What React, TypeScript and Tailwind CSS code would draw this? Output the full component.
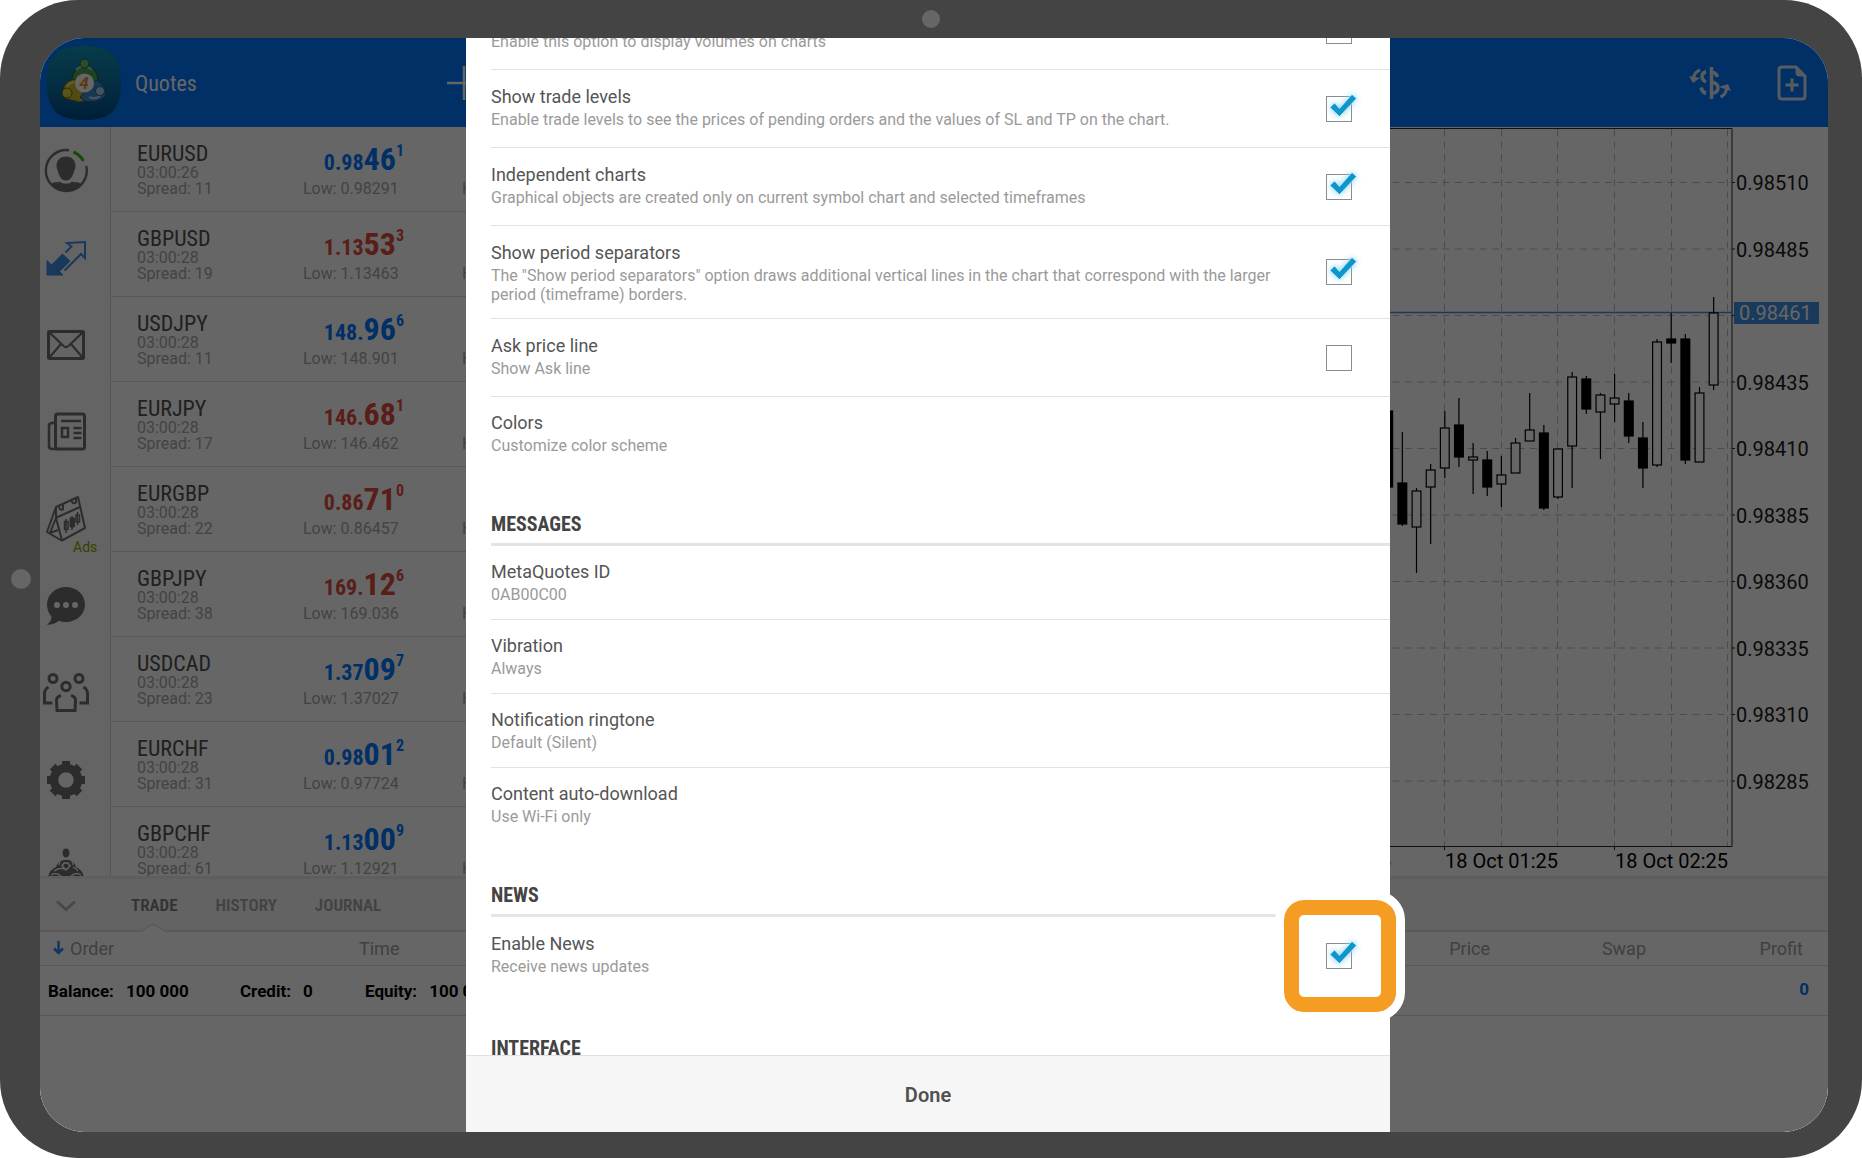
import { ReactNode, useState } from 'react';

type Quote = {
  symbol: string;
  time: string;
  spread: number;
  price: [string, string, string];
  low: string;
  up: boolean;
};

const quotes: Quote[] = [
  { symbol: 'EURUSD', time: '03:00:26', spread: 11, price: ['0.98', '46', '1'], low: '0.98291', up: true },
  { symbol: 'GBPUSD', time: '03:00:28', spread: 19, price: ['1.13', '53', '3'], low: '1.13463', up: false },
  { symbol: 'USDJPY', time: '03:00:28', spread: 11, price: ['148.', '96', '6'], low: '148.901', up: true },
  { symbol: 'EURJPY', time: '03:00:28', spread: 17, price: ['146.', '68', '1'], low: '146.462', up: false },
  { symbol: 'EURGBP', time: '03:00:28', spread: 22, price: ['0.86', '71', '0'], low: '0.86457', up: false },
  { symbol: 'GBPJPY', time: '03:00:28', spread: 38, price: ['169.', '12', '6'], low: '169.036', up: false },
  { symbol: 'USDCAD', time: '03:00:28', spread: 23, price: ['1.37', '09', '7'], low: '1.37027', up: true },
  { symbol: 'EURCHF', time: '03:00:28', spread: 31, price: ['0.98', '01', '2'], low: '0.97724', up: true },
  { symbol: 'GBPCHF', time: '03:00:28', spread: 61, price: ['1.13', '00', '9'], low: '1.12921', up: true },
];

// [high, low, body top, body bottom, filled]
const candles: [number, number, number, number, boolean][] = [
  [411, 487, 411, 487, true],
  [432, 526, 483, 524, true],
  [488, 573, 491, 527, false],
  [464, 544, 470, 487, false],
  [411, 478, 428, 468, false],
  [398, 467, 425, 457, true],
  [443, 494, 457, 460, false],
  [451, 496, 460, 487, true],
  [456, 507, 475, 484, false],
  [438, 473, 443, 473, false],
  [393, 441, 430, 441, false],
  [425, 510, 433, 508, true],
  [449, 499, 449, 497, false],
  [372, 488, 377, 446, false],
  [376, 414, 379, 409, true],
  [393, 459, 395, 412, false],
  [374, 422, 398, 404, false],
  [393, 443, 401, 436, true],
  [422, 488, 438, 468, true],
  [339, 467, 342, 465, false],
  [313, 363, 339, 343, true],
  [334, 464, 339, 460, true],
  [387, 462, 393, 462, false],
  [297, 390, 313, 385, false],
];

const priceLabels = ['0.98510', '0.98485', '', '0.98435', '0.98410', '0.98385', '0.98360', '0.98335', '0.98310', '0.98285'];

function Chart() {
  return (
    <svg width="448" height="749" viewBox="1380 127 448 749" className="shrink-0" fontFamily="Roboto, sans-serif" fontSize="20">
      <g stroke="#bdbdbd" strokeWidth="1" strokeDasharray="7 5.5">
        {[1444.5, 1501.5, 1557.5, 1614.5, 1671.5, 1727.5].map((x) => (
          <line key={x} x1={x} x2={x} y1="129" y2="846" />
        ))}
        {priceLabels.map((_, i) => (
          <line key={i} x1="1380" x2="1731" y1={182.5 + i * 66.5} y2={182.5 + i * 66.5} />
        ))}
      </g>
      <path d="M1380 128.5H1732V846.5H1380M1444.5 846v4M1614.5 846v4" fill="none" stroke="#2a2a2a" />
      <line x1="1380" x2="1733" y1="312.5" y2="312.5" stroke="#4191e6" strokeWidth="1.5" />
      {candles.map(([high, low, top, bottom, filled], i) => {
        const x = 1388.2 + i * 14.15;
        return (
          <g key={i} stroke="#000" strokeWidth="1.2">
            <path d={`M${x} ${high}V${top}M${x} ${bottom}V${low}`} />
            <rect x={x - 4.4} y={top} width="8.8" height={bottom - top} fill={filled ? '#000' : '#fff'} />
          </g>
        );
      })}
      {priceLabels.map((label, i) => (
        <g key={i}>
          <line x1="1732" x2="1735" y1={182.5 + i * 66.5} y2={182.5 + i * 66.5} stroke="#2a2a2a" />
          {label && (
            <text x="1736" y={190 + i * 66.5} fill="#1a1a1a">
              {label}
            </text>
          )}
        </g>
      ))}
      <rect x="1734" y="302" width="85" height="22" fill="#4191e6" />
      <text x="1739" y="320" fill="#fff">
        0.98461
      </text>
      <text x="1391" y="868" textAnchor="end">
        18 Oct 00:25
      </text>
      <text x="1445" y="868">
        18 Oct 01:25
      </text>
      <text x="1615" y="868">
        18 Oct 02:25
      </text>
    </svg>
  );
}

function Logo() {
  return (
    <svg width="76" height="76" viewBox="0 0 76 76">
      <defs>
        <linearGradient id="logoBg" x1="0" y1="0" x2="0" y2="1">
          <stop offset="0" stopColor="#1296b4" />
          <stop offset="0.5" stopColor="#0a74a8" />
          <stop offset="1" stopColor="#004c8c" />
        </linearGradient>
      </defs>
      <path d="M38 1C65 1 75 11 75 38S65 75 38 75 1 65 1 38 11 1 38 1Z" fill="url(#logoBg)" />
      <path d="M26 34a13 13 0 1 1 26 0l-5 8H31Z" fill="#4da65a" stroke="#1d5a34" />
      <path d="M30 25q8-8 16 0" fill="none" stroke="#9ad890" strokeWidth="2" />
      <path d="M29 34q-11 2-12 12-1 6 4 8l12 3q7 0 10-4L36 38Z" fill="#c9bb2c" stroke="#6b6210" />
      <path d="M20 46q1-8 8-9" fill="none" stroke="#f2ea80" strokeWidth="2" />
      <path d="M50 35q9 4 10 12 0 5-4 7-6 3-14 3-5-1-8-5l7-8Z" fill="#3c8cc8" stroke="#1c5488" />
      <path d="M43 52q6 3 11-1" fill="none" stroke="#a6d4f2" strokeWidth="2.500" />
      <circle cx="38.500" cy="18.500" r="4.500" fill="#6cc070" stroke="#1f5c35" />
      <circle cx="21" cy="48" r="5" fill="#e0d244" stroke="#6d6410" />
      <circle cx="54" cy="46" r="4.500" fill="#a8d4f0" stroke="#24608c" />
      <circle cx="38.500" cy="38" r="9.500" fill="#fff" />
      <text x="38" y="44" textAnchor="middle" fontFamily="Roboto, sans-serif" fontWeight="700" fontStyle="italic" fontSize="17" fill="#f08a2c">
        4
      </text>
    </svg>
  );
}

function Icon({ children }: { children: ReactNode }) {
  return (
    <svg width="48" height="48" viewBox="0 0 48 48" fill="none" stroke="#6f6f6f" strokeWidth="3">
      {children}
    </svg>
  );
}

const navItems: { label: string; badge?: string; icon: ReactNode }[] = [
  {
    label: 'Accounts',
    icon: (
      <Icon>
        <path d="M27 3.200A20.500 20.500 0 1 0 44.300 19" strokeWidth="2.400" />
        <path d="M31.500 5a20.500 20.500 0 0 1 10 9" stroke="#3fb51f" />
        <path
          d="M24 9.500c6 0 9.500 4 9.500 9 0 1.500-.2 3-1 4.500C31 28.500 29 33.500 24 33.500s-7-5-8.500-10.500c-.8-1.500-1-3-1-4.500 0-5 3.500-9 9.500-9Z"
          fill="#6f6f6f"
          stroke="none"
        />
        <path d="M9 37c4-3 6-1 9-2.500 2 3 10 3 12 0 3 1.500 5-.5 9 2.500A20 20 0 0 1 9 37Z" fill="#6f6f6f" stroke="none" />
      </Icon>
    ),
  },
  {
    label: 'Quotes',
    icon: (
      <Icon>
        <path d="M5 41V26.500l4.500 4.500 11-11 7.500 7L17.500 37.500 21 41Z" fill="#3c8ce6" stroke="#3c8ce6" strokeWidth="1" />
        <path d="M22.500 36.500 39 20l4 4V8L25 9l4.500 3.500-6 6" stroke="#3c8ce6" strokeWidth="2" />
      </Icon>
    ),
  },
  {
    label: 'Mail',
    icon: (
      <Icon>
        <rect x="6.500" y="10.500" width="35" height="27" rx="1" />
        <path d="M7 11l14.500 14q2.500 2 5 0L41 11M7 37l12-14M41 37 29 23" strokeWidth="2.200" />
      </Icon>
    ),
  },
  {
    label: 'News',
    icon: (
      <Icon>
        <rect x="13.500" y="6" width="29" height="35" rx="2" />
        <path d="M13 15h-3q-3 0-3 3v20q0 3 3 3h7" strokeWidth="2.600" />
        <rect x="20" y="20" width="6" height="9" strokeWidth="2.500" />
        <path d="M19 13h20M31.500 20h8M31.500 25h8M31.500 30h8" strokeWidth="2.400" />
      </Icon>
    ),
  },
  {
    label: 'Calendar',
    badge: 'Ads',
    icon: (
      <Icon>
        <g strokeWidth="2" strokeLinejoin="round">
          <path d="M14 12 36 2l7 31-23 12.500-6-22.500Z" />
          <path d="M14 12 5 37l14.500 8.500M13.500 23 39 11.500M14 23 8 38l8-3" />
          <path d="M17 10q0 6 4 4.500V9M29 4q1 6 5 3.500V3" />
          <path d="M24 24v14M30 21v14M35.500 17v13" strokeWidth="1.500" />
          <rect x="22.500" y="26.500" width="3.500" height="8" strokeWidth="1.500" />
          <rect x="28.500" y="23.500" width="3.500" height="8" fill="#6f6f6f" />
          <rect x="34" y="20" width="3.500" height="7" strokeWidth="1.500" />
        </g>
      </Icon>
    ),
  },
  {
    label: 'Chat',
    icon: (
      <Icon>
        <path
          d="M24 5c11 0 19 8 19 17.500S35 40 24 40c-2.500 0-5-.3-7-1.200-3.500 3-8 4.200-12 4 3-2.500 4.500-5 4.500-8C6.500 31.500 5 27 5 22.500 5 13 13 5 24 5Z"
          fill="#6f6f6f"
          stroke="none"
        />
        <g fill="#fff" stroke="none">
          <circle cx="15" cy="23" r="3" />
          <circle cx="24" cy="23" r="3" />
          <circle cx="33" cy="23" r="3" />
        </g>
      </Icon>
    ),
  },
  {
    label: 'Community',
    icon: (
      <Icon>
        <g strokeWidth="3">
          <circle cx="11" cy="9.500" r="4" />
          <circle cx="37" cy="9.500" r="4" />
          <circle cx="24" cy="17.500" r="4.200" />
          <path d="M6.500 18Q2.500 20.500 2.500 24.500v9.500h8M41.500 18q4 2.500 4 6.500v9.500h-8" />
          <path d="M19 26.500q-4.500 1-4.500 5l.5 10h18l.5-10q0-4-4.500-5" />
        </g>
      </Icon>
    ),
  },
  {
    label: 'Settings',
    icon: (
      <Icon>
        <circle cx="24" cy="24" r="12" strokeWidth="8.500" />
        <g strokeWidth="8" strokeLinecap="butt">
          {[0, 45, 90, 135, 180, 225, 270, 315].map((angle) => (
            <path key={angle} d="M24 10V5" transform={`rotate(${angle} 24 24)`} />
          ))}
        </g>
      </Icon>
    ),
  },
  {
    label: 'About',
    icon: (
      <Icon>
        <path d="M14 24a10.500 10.500 0 0 1 20 0q8 4 8 12t-8 8H14q-8 0-8-8t8-12Z" fill="#6f6f6f" stroke="none" />
        <ellipse cx="24" cy="10" rx="4" ry="5" fill="#6f6f6f" stroke="#fff" strokeWidth="1" />
        <path d="M17 22q1-6 4-7M31 22q-1-6-4-7M12 28q5-4 11-2M36 28q-2-3-5-4M9 32q5-3 10 1M39 32q-5-3-10 1" stroke="#fff" strokeWidth="1.200" />
        <path d="M20 23l2-3h4l2 3-4 4Z" stroke="#fff" strokeWidth="1.500" />
      </Icon>
    ),
  },
];

function Header() {
  return (
    <header className="flex h-[89px] shrink-0 items-center bg-[#0078ff] pl-[6px] text-white">
      <Logo />
      <h1 className="ml-[13px] w-[312px] pt-[2px] font-['Roboto_Condensed','Roboto',sans-serif] text-[22px]">Quotes</h1>
      <button type="button" aria-label="Add symbol">
        <svg width="34" height="34" viewBox="0 0 34 34" stroke="#fff" strokeWidth="2.500">
          <path d="M17 0v34M0 17h34" />
        </svg>
      </button>
      <div className="ml-auto flex items-center gap-[46px] pr-[21px]">
        <button type="button" aria-label="One click trading">
          <svg width="42" height="34" viewBox="0 0 42 34" fill="none" stroke="#dde6f2" strokeWidth="3.500">
            <path d="M22.500 1v32" />
            <path d="M28.500 11q-1-4-5-4.500M23 16q6 1.500 6 6t-6 5.500" />
            <path d="M17 5.500q-4 1.500-4 5t4 5.500M12 21.500q1 4.500 5 6" />
            <path d="M11 4Q5.500 6 4.500 12M31.500 31q5-2 6-8" strokeWidth="3" />
            <path d="M0 10l4 7 7-5ZM30 21l9-3 3 7Z" fill="#dde6f2" stroke="none" />
          </svg>
        </button>
        <button type="button" aria-label="New order">
          <svg width="30" height="36" viewBox="0 0 30 36" fill="none" stroke="#dde6f2" strokeWidth="3">
            <path d="M5 2h14l9 9v20q0 3-3 3H5q-3 0-3-3V5q0-3 3-3Z" />
            <path d="M19 2v6q0 3 3 3h6Z" fill="#dde6f2" strokeWidth="1" />
            <path d="M15 13.500v13M8.500 20h13" />
          </svg>
        </button>
      </div>
    </header>
  );
}

function Sidebar() {
  return (
    <nav className="w-[71px] shrink-0 border-r border-[#d8d8d8] bg-[#fafafa]">
      {navItems.map(({ label, badge, icon }) => (
        <button key={label} type="button" aria-label={label} className="relative flex h-[87px] items-center pl-[2px]">
          {icon}
          {badge && <span className="absolute top-[64px] left-[33px] text-[14px] leading-[16px] text-[#86a800]">{badge}</span>}
        </button>
      ))}
    </nav>
  );
}

function QuoteRow({ quote }: { quote: Quote }) {
  const [whole, big, sup] = quote.price;

  return (
    <li className="flex h-[85px] border-b border-[#dadada] pt-[16px] pl-[26px] text-[16px] leading-[16px] text-[#a8a8a8]">
      <div className="w-[166px]">
        <p className="font-['Roboto_Condensed','Roboto',sans-serif] text-[22px] leading-[22px] text-[#505050]">{quote.symbol}</p>
        <p>{quote.time}</p>
        <p>Spread: {quote.spread}</p>
      </div>
      <div className="w-[159px]">
        <p
          className={`flex h-[38px] w-[101px] justify-end font-['Roboto_Condensed','Roboto',sans-serif] font-bold ${
            quote.up ? 'text-[#0078ff]' : 'text-[#e04b40]'
          }`}
        >
          <span className="pt-[8px] text-[22px] leading-[24px]">{whole}</span>
          <span className="text-[32px] leading-[32px]">{big}</span>
          <span className="text-[16px] leading-[16px]">{sup}</span>
        </p>
        <p>Low: {quote.low}</p>
      </div>
      <p className="pt-[38px]">High:</p>
    </li>
  );
}

function TradePanel() {
  return (
    <section className="h-[256px] shrink-0 border-t-[3px] border-[#ececec] bg-white">
      <div className="relative flex h-[53px] items-center border-b-2 border-[#e0e0e0] bg-[#f7f7f7] pt-[2px] pl-[16px] font-['Roboto_Condensed','Roboto',sans-serif] text-[17px] font-semibold text-[#a5a5a5]">
        <button type="button" aria-label="Collapse">
          <svg width="20" height="12" viewBox="0 0 20 12" fill="none" stroke="#b5b5b5" strokeWidth="3">
            <path d="M1 1.500 10 9.500 19 1.500" />
          </svg>
        </button>
        <button type="button" className="ml-[55px] text-[#808080]">
          TRADE
        </button>
        <button type="button" className="ml-[38px]">
          HISTORY
        </button>
        <button type="button" className="ml-[38px]">
          JOURNAL
        </button>
        <svg width="24" height="10" viewBox="0 0 24 10" className="absolute top-[45px] left-[101px]">
          <path d="M0 7.500 9 1.500q3-2 6 0L24 7.500V10H0Z" fill="#fff" />
          <path d="M0 7.500 9 1.500q3-2 6 0L24 7.500" fill="none" stroke="#dedede" strokeWidth="1.500" />
        </svg>
      </div>
      <table className="w-full table-fixed text-[18px]">
        <thead>
          <tr className="h-[33px] border-b border-[#dadada] text-[#a0a0a0]">
            <th className="w-[319px] pl-[13px] text-left font-normal">
              <span className="flex items-center gap-[6px]">
                <svg width="11" height="14" viewBox="0 0 11 14" fill="none" stroke="#2f86e8" strokeWidth="2.500">
                  <path d="M5.500 0v12M1 7.500 5.500 12 10 7.500" />
                </svg>
                Order
              </span>
            </th>
            <th className="text-left font-normal">Time</th>
            <th className="text-right font-normal">Price</th>
            <th className="w-[156px] text-right font-normal">Swap</th>
            <th className="w-[182px] pr-[25px] text-right font-normal">Profit</th>
          </tr>
        </thead>
        <tbody>
          <tr className="h-[50px] border-b border-[#dadada] text-[17px] font-bold">
            <td colSpan={4} className="pt-[3px] pl-[8px]">
              <dl className="flex">
                <div className="flex w-[192px] gap-[12px]">
                  <dt>Balance:</dt>
                  <dd>100 000</dd>
                </div>
                <div className="flex w-[125px] gap-[12px]">
                  <dt>Credit:</dt>
                  <dd>0</dd>
                </div>
                <div className="flex gap-[12px]">
                  <dt>Equity:</dt>
                  <dd>100 000</dd>
                </div>
              </dl>
            </td>
            <td className="pr-[19px] text-right text-[#0078ff]">0</td>
          </tr>
        </tbody>
      </table>
    </section>
  );
}

type SettingRowProps = {
  title: string;
  description: string;
  last?: boolean;
};

function SettingRow({ title, description, last }: SettingRowProps) {
  return (
    <div className={`border-b pt-[13px] pb-[15px] ${last ? 'border-transparent' : 'border-[#e2e2e2]'}`}>
      <p className="text-[18px] leading-[26px] text-[#555]">{title}</p>
      <p className="text-[16px] leading-[19px] text-[#9a9a9a]">{description}</p>
    </div>
  );
}

type CheckRowProps = SettingRowProps & {
  defaultChecked?: boolean;
  highlighted?: boolean;
};

function CheckRow({ title, description, last, defaultChecked = false, highlighted }: CheckRowProps) {
  const [checked, setChecked] = useState(defaultChecked);

  return (
    <label className={`flex min-h-[78px] border-b pr-[38px] ${last ? 'border-transparent' : 'border-[#e2e2e2]'}`}>
      <span className="flex-1 pt-[14px] pr-[26px] pb-[14px]">
        <span className="block text-[18px] leading-[26px] text-[#555]">{title}</span>
        <span className="block text-[16px] leading-[19px] text-[#9a9a9a]">{description}</span>
      </span>
      <span className="relative self-center">
        {highlighted && (
          <span className="absolute -top-[43px] -right-[44px] -bottom-[43px] -left-[42px] rounded-[20px] border-[15px] border-[#f59c23] bg-white outline-[9px] outline-white" />
        )}
        <input
          type="checkbox"
          checked={checked}
          onChange={(e) => setChecked(e.target.checked)}
          className="relative block h-[26px] w-[26px] appearance-none border border-[#8c8c8c] bg-white"
        />
        {checked && (
          <svg width="36" height="36" viewBox="0 0 36 36" className="pointer-events-none absolute -top-[6px] -left-[1px] drop-shadow-[0_0_3px_#7fd0f0]">
            <path d="M5 17.500 9.500 13l5 5.500L27 4.500l4.500 4L14.500 26.500Z" fill="#0d96cc" stroke="#fff" strokeWidth="0.500" />
          </svg>
        )}
      </span>
    </label>
  );
}

function SectionTitle({ children }: { children: ReactNode }) {
  return (
    <h2 className="h-[75px] border-b-[3px] border-[#e4e4e4] pt-[41px] font-['Roboto_Condensed','Roboto',sans-serif] text-[20px] leading-[24px] font-bold text-[#444]">
      {children}
    </h2>
  );
}

function SettingsDialog() {
  return (
    <div className="absolute inset-0 flex justify-center bg-black/60 pr-[12px]">
      <div role="dialog" aria-label="Settings" className="flex w-[924px] flex-col bg-white">
        <div className="min-h-0 flex-1 overflow-y-clip pl-[25px]">
          <div className="-mt-[46px]">
            <CheckRow title="Show volumes" description="Enable this option to display volumes on charts" />
            <CheckRow
              title="Show trade levels"
              description="Enable trade levels to see the prices of pending orders and the values of SL and TP on the chart."
              defaultChecked
            />
            <CheckRow
              title="Independent charts"
              description="Graphical objects are created only on current symbol chart and selected timeframes"
              defaultChecked
            />
            <CheckRow
              title="Show period separators"
              description={'The "Show period separators" option draws additional vertical lines in the chart that correspond with the larger period (timeframe) borders.'}
              defaultChecked
            />
            <CheckRow title="Ask price line" description="Show Ask line" />
            <SettingRow title="Colors" description="Customize color scheme" last />
            <SectionTitle>MESSAGES</SectionTitle>
            <SettingRow title="MetaQuotes ID" description="0AB00C00" />
            <SettingRow title="Vibration" description="Always" />
            <SettingRow title="Notification ringtone" description="Default (Silent)" />
            <SettingRow title="Content auto-download" description="Use Wi-Fi only" last />
            <SectionTitle>NEWS</SectionTitle>
            <CheckRow title="Enable News" description="Receive news updates" defaultChecked highlighted last />
            <SectionTitle>INTERFACE</SectionTitle>
          </div>
        </div>
        <button type="button" className="h-[77px] shrink-0 border-t border-[#e0e0e0] bg-[#f6f6f6] pt-[2px] text-[20px] font-semibold text-[#505050]">
          Done
        </button>
      </div>
    </div>
  );
}

export default function App() {
  return (
    <div className="bg-white font-['Roboto',sans-serif]">
      <div className="relative h-screen rounded-[78px] bg-[#444] pt-[38px] pr-[34px] pb-[26px] pl-[40px]">
        <span className="absolute top-[10px] left-1/2 h-[18px] w-[18px] -translate-x-1/2 rounded-full bg-[#666]" />
        <span className="absolute top-1/2 left-[11px] h-[20px] w-[20px] -translate-y-1/2 rounded-full bg-[#666]" />
        <div className="relative flex h-full flex-col overflow-hidden rounded-[45px] bg-white">
          <Header />
          <main className="flex min-h-0 flex-1 overflow-hidden">
            <Sidebar />
            <ul className="w-[520px] shrink-0">
              {quotes.map((quote) => (
                <QuoteRow key={quote.symbol} quote={quote} />
              ))}
            </ul>
            <div className="flex flex-1 justify-end overflow-hidden">
              <Chart />
            </div>
          </main>
          <TradePanel />
          <SettingsDialog />
        </div>
      </div>
    </div>
  );
}
